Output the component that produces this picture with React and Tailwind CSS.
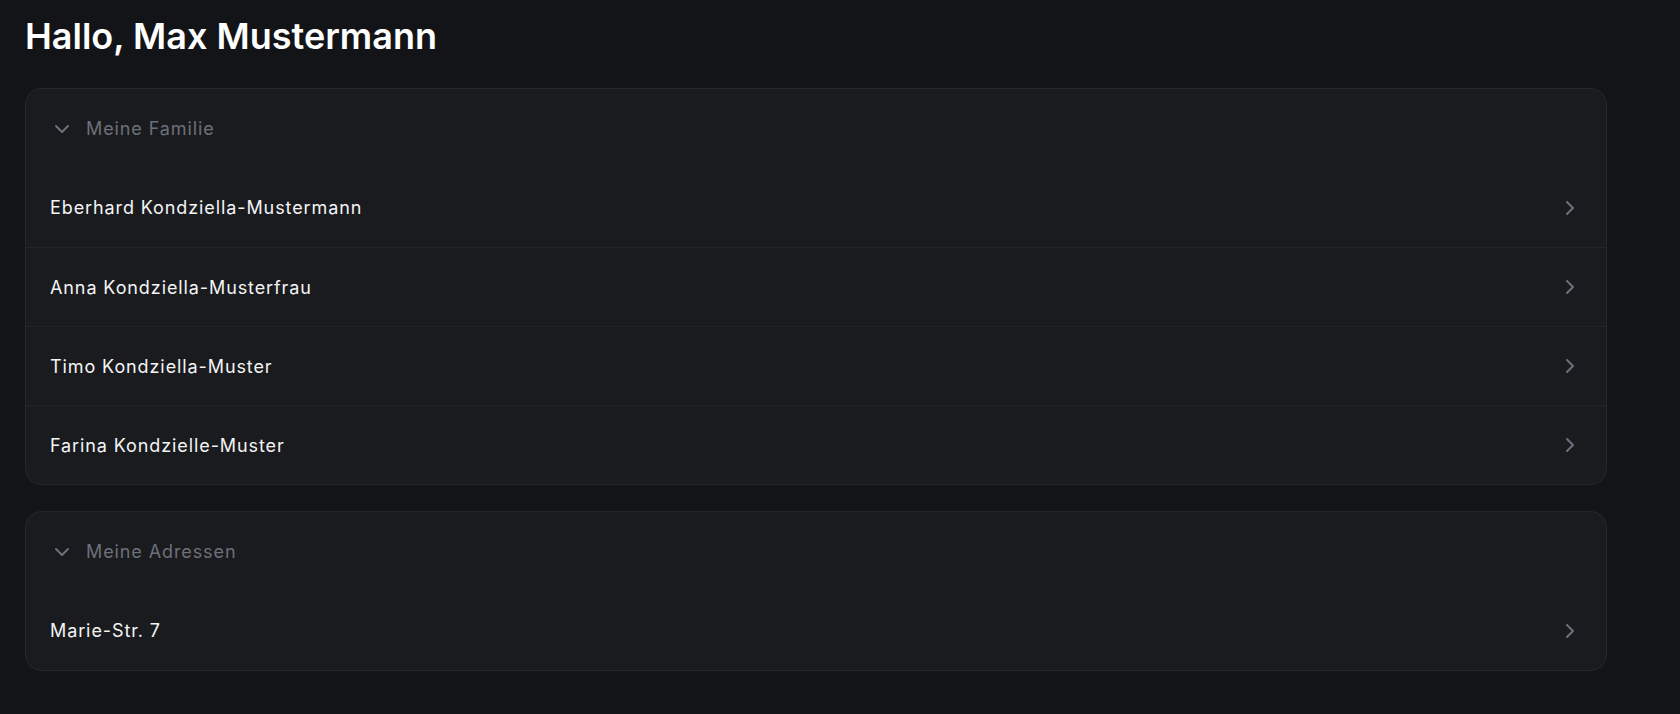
import { ChevronDown, ChevronRight } from "lucide-react";

const familie = [
  "Eberhard Kondziella-Mustermann",
  "Anna Kondziella-Musterfrau",
  "Timo Kondziella-Muster",
  "Farina Kondzielle-Muster",
];

const adressen = ["Marie-Str. 7"];

function Section({ title, items }) {
  return (
    <div className="rounded-2xl border border-[#26272b] bg-[#1a1b1e]">
      {/* Kopfzeile */}
      <div className="flex h-[79px] items-center gap-3 px-6">
        <ChevronDown size={24} strokeWidth={2} className="text-[#6c707b]" />
        <span className="text-[18px] tracking-[0.05em] text-[#6c707b]">{title}</span>
      </div>
      {items.map((item, i) => (
        <div
          key={item}
          className={`flex h-[79px] items-center justify-between px-6 ${
            i > 0 ? "border-t border-[#232428]" : ""
          }`}
        >
          <span className="text-[18px] tracking-[0.05em] text-[#f4f4f5]">{item}</span>
          <ChevronRight size={24} strokeWidth={2} className="text-[#6c707b]" />
        </div>
      ))}
    </div>
  );
}

export default function App() {
  return (
    <div
      className="min-h-screen bg-[#131417] px-[25px] pt-4 pb-10"
      style={{ fontFamily: "Inter, 'Noto Sans', sans-serif" }}
    >
      <h1 className="text-4xl font-semibold text-white">Hallo, Max Mustermann</h1>
      <div className="mt-8 flex w-[1582px] flex-col gap-[26px]">
        <Section title="Meine Familie" items={familie} />
        <Section title="Meine Adressen" items={adressen} />
      </div>
    </div>
  );
}
